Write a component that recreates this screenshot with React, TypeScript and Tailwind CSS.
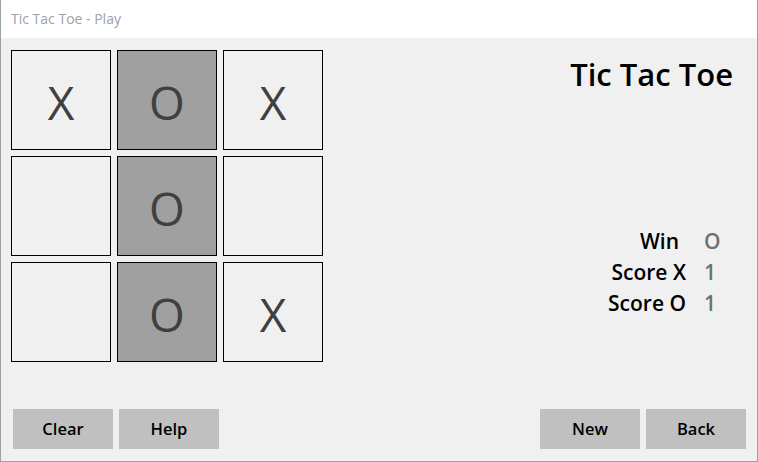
const board = [
  ['X', 'O', 'X'],
  ['', 'O', ''],
  ['', 'O', 'X'],
];

const scores = [
  { label: 'Win', value: 'O', pad: 'pr-[7px]' },
  { label: 'Score X', value: '1', pad: '' },
  { label: 'Score O', value: '1', pad: '' },
];

function Cell({ mark, col }: { mark: string; col: number }) {
  return (
    <div
      className={`w-[100px] h-[100px] border border-black flex items-center justify-center pt-[4px] text-[46px] leading-none text-[#404040] ${
        col === 1 ? 'bg-[#a0a0a0]' : 'bg-[#f0f0f0]'
      }`}
    >
      {mark}
    </div>
  );
}

function Btn({ label }: { label: string }) {
  return (
    <button className="w-[100px] h-[40px] bg-[#c0c0c0] text-[16.5px] font-semibold text-black flex items-center justify-center">
      {label}
    </button>
  );
}

export default function App() {
  return (
    <div
      className="w-[758px] h-[462px] flex flex-col border-l border-r border-b border-[#a0a0a0] bg-[#f0f0f0]"
      style={{ fontFamily: '"Open Sans", "Noto Sans", sans-serif' }}
    >
      <div className="h-[38px] bg-white flex items-center pl-[10px] pb-[2px] text-[14px] text-[#9aa2aa]">
        Tic Tac Toe - Play
      </div>

      <div className="flex-1 flex flex-col">
        <div className="flex justify-between">
          <div className="grid grid-cols-[100px_100px_100px] gap-[6px] pl-[10px] pt-[12px]">
            {board.map((row, r) =>
              row.map((m, c) => <Cell key={`${r}-${c}`} mark={m} col={c} />)
            )}
          </div>

          <div className="flex flex-col items-end">
            <h1 className="pt-[19px] pr-[24px] text-[31px] leading-[34px] font-semibold text-black">
              Tic Tac Toe
            </h1>
            <div className="mt-[135px] pr-[23px] grid grid-cols-[auto_30px] gap-x-[18px] text-[21px] leading-[31px] font-semibold">
              {scores.map((s) => (
                <div key={s.label} className="contents">
                  <div className={`text-right text-black ${s.pad}`}>{s.label}</div>
                  <div className="text-[#707070]">{s.value}</div>
                </div>
              ))}
            </div>
          </div>
        </div>

        <div className="mt-auto flex justify-between pl-[12px] pr-[11px] pb-[12px]">
          <div className="flex gap-[6px]">
            <Btn label="Clear" />
            <Btn label="Help" />
          </div>
          <div className="flex gap-[6px]">
            <Btn label="New" />
            <Btn label="Back" />
          </div>
        </div>
      </div>
    </div>
  );
}
